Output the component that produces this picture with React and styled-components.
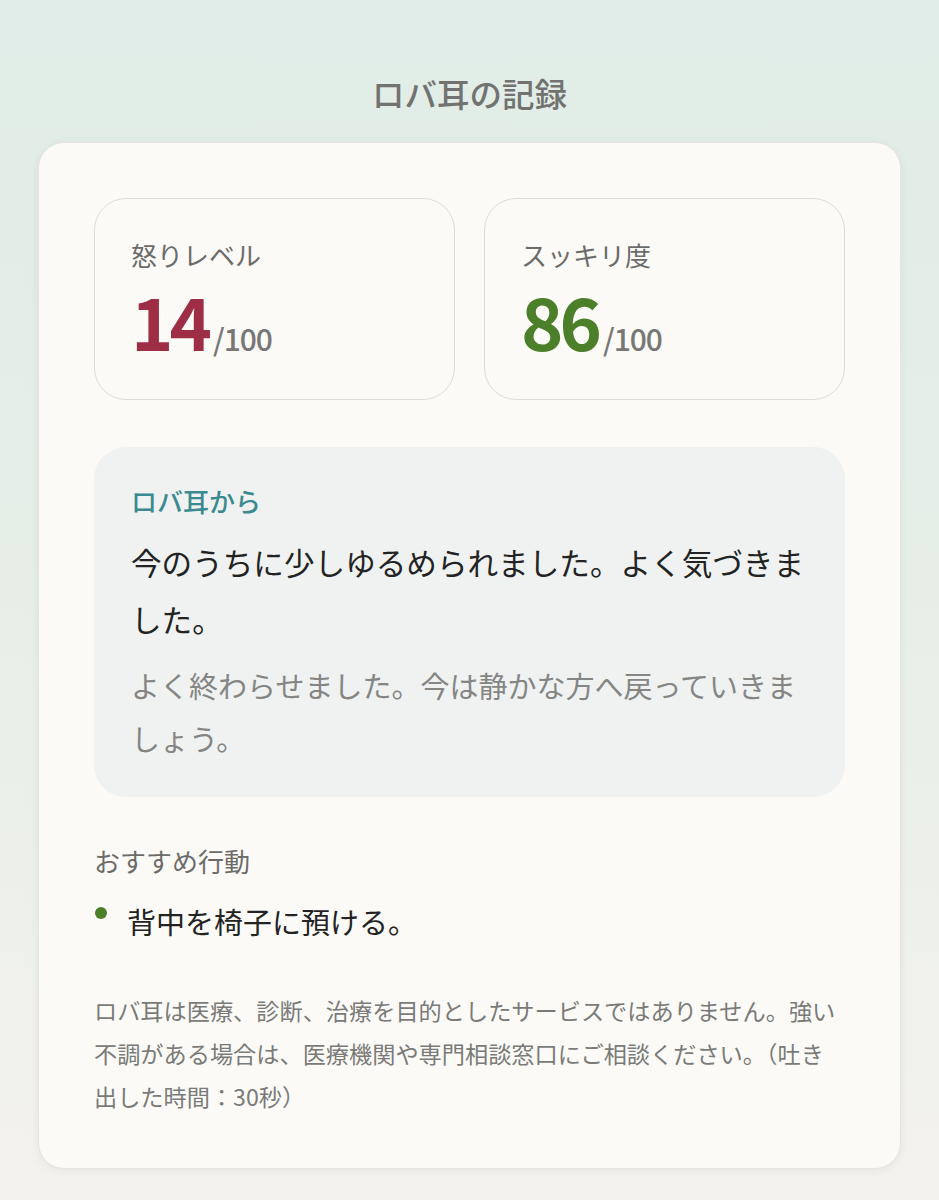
import React from "react";
import styled, { createGlobalStyle } from "styled-components";

const Global = createGlobalStyle`
  html, body { margin: 0; padding: 0; }
  body {
    font-family: "Noto Sans CJK JP", "Noto Sans", sans-serif;
    background: linear-gradient(180deg, #e1ede8 0%, #e6eee8 45%, #f4f2ec 100%);
    min-height: 1200px;
  }
`;

const Page = styled.main`
  min-height: 1200px;
  box-sizing: border-box;
  padding: 72px 38px 0;
  display: flex;
  flex-direction: column;
`;

const Title = styled.h1`
  margin: 0 0 28px;
  text-align: center;
  font-size: 32.5px;
  line-height: 42px;
  font-weight: 500;
  color: #727370;
`;

const Card = styled.section`
  background: #fbfaf7;
  border: 1px solid #e6e4de;
  border-radius: 26px;
  box-shadow: 0 2px 10px rgba(0, 0, 0, 0.06);
  padding: 55px 55px 50px;
  display: flex;
  flex-direction: column;
`;

const StatGrid = styled.div`
  display: grid;
  grid-template-columns: 1fr 1fr;
  gap: 29px;
`;

const StatBox = styled.div`
  border: 1.5px solid #dedcd6;
  border-radius: 32px;
  padding: 37px 36px 43px;
  display: flex;
  flex-direction: column;
  gap: 10px;
`;

const StatLabel = styled.div`
  font-size: 26px;
  line-height: 38px;
  color: #6b6b69;
`;

const StatValue = styled.div`
  display: flex;
  align-items: baseline;
  gap: 5px;
  line-height: 1;
  height: 72px;
`;

const BigNum = styled.span`
  font-size: 72px;
  font-weight: 700;
  color: ${(p) => p.$color};
  letter-spacing: -4px;
`;

const Total = styled.span`
  font-size: 30px;
  font-weight: 500;
  color: #777775;
  letter-spacing: -1px;
`;

const Message = styled.div`
  margin-top: 47px;
  background: #eff2f1;
  border-radius: 32px;
  padding: 35px 37px 32px;
  display: flex;
  flex-direction: column;
`;

const From = styled.div`
  font-size: 26px;
  line-height: 38px;
  color: #3b8a8f;
  font-weight: 500;
  margin-bottom: 14px;
`;

const MainText = styled.p`
  margin: 0 0 11px;
  font-size: 30.6px;
  line-height: 57px;
  color: #222322;
`;

const SubText = styled.p`
  margin: 0;
  font-size: 29px;
  line-height: 53px;
  color: #858584;
`;

const SectionLabel = styled.div`
  margin-top: 45px;
  font-size: 26px;
  line-height: 38px;
  color: #6b6b69;
`;

const ActionList = styled.ul`
  list-style: none;
  margin: 19px 0 0;
  padding: 0;
`;

const ActionItem = styled.li`
  display: flex;
  align-items: flex-start;
  gap: 20px;
  font-size: 29px;
  line-height: 44px;
  color: #222322;
`;

const Dot = styled.span`
  flex: none;
  width: 12px;
  height: 12px;
  border-radius: 50%;
  background: #4b7f2a;
  margin: 8px 0 0 1px;
`;

const Disclaimer = styled.p`
  margin: 46px 0 0;
  font-size: 23.2px;
  line-height: 43px;
  color: #7a7a78;
`;

export default function App() {
  return (
    <>
      <Global />
      <Page>
        <Title>ロバ耳の記録</Title>
        <Card>
          <StatGrid>
            <StatBox>
              <StatLabel>怒りレベル</StatLabel>
              <StatValue>
                <BigNum $color="#9d2e46">14</BigNum>
                <Total>/100</Total>
              </StatValue>
            </StatBox>
            <StatBox>
              <StatLabel>スッキリ度</StatLabel>
              <StatValue>
                <BigNum $color="#4b7f2a">86</BigNum>
                <Total>/100</Total>
              </StatValue>
            </StatBox>
          </StatGrid>
          <Message>
            <From>ロバ耳から</From>
            <MainText>今のうちに少しゆるめられました。よく気づきました。</MainText>
            <SubText>よく終わらせました。今は静かな方へ戻っていきましょう。</SubText>
          </Message>
          <SectionLabel>おすすめ行動</SectionLabel>
          <ActionList>
            <ActionItem>
              <Dot />
              <span>背中を椅子に預ける。</span>
            </ActionItem>
          </ActionList>
          <Disclaimer>
            ロバ耳は医療、診断、治療を目的としたサービスではありません。強い不調がある場合は、医療機関や専門相談窓口にご相談ください。（吐き出した時間：30秒）
          </Disclaimer>
        </Card>
      </Page>
    </>
  );
}
